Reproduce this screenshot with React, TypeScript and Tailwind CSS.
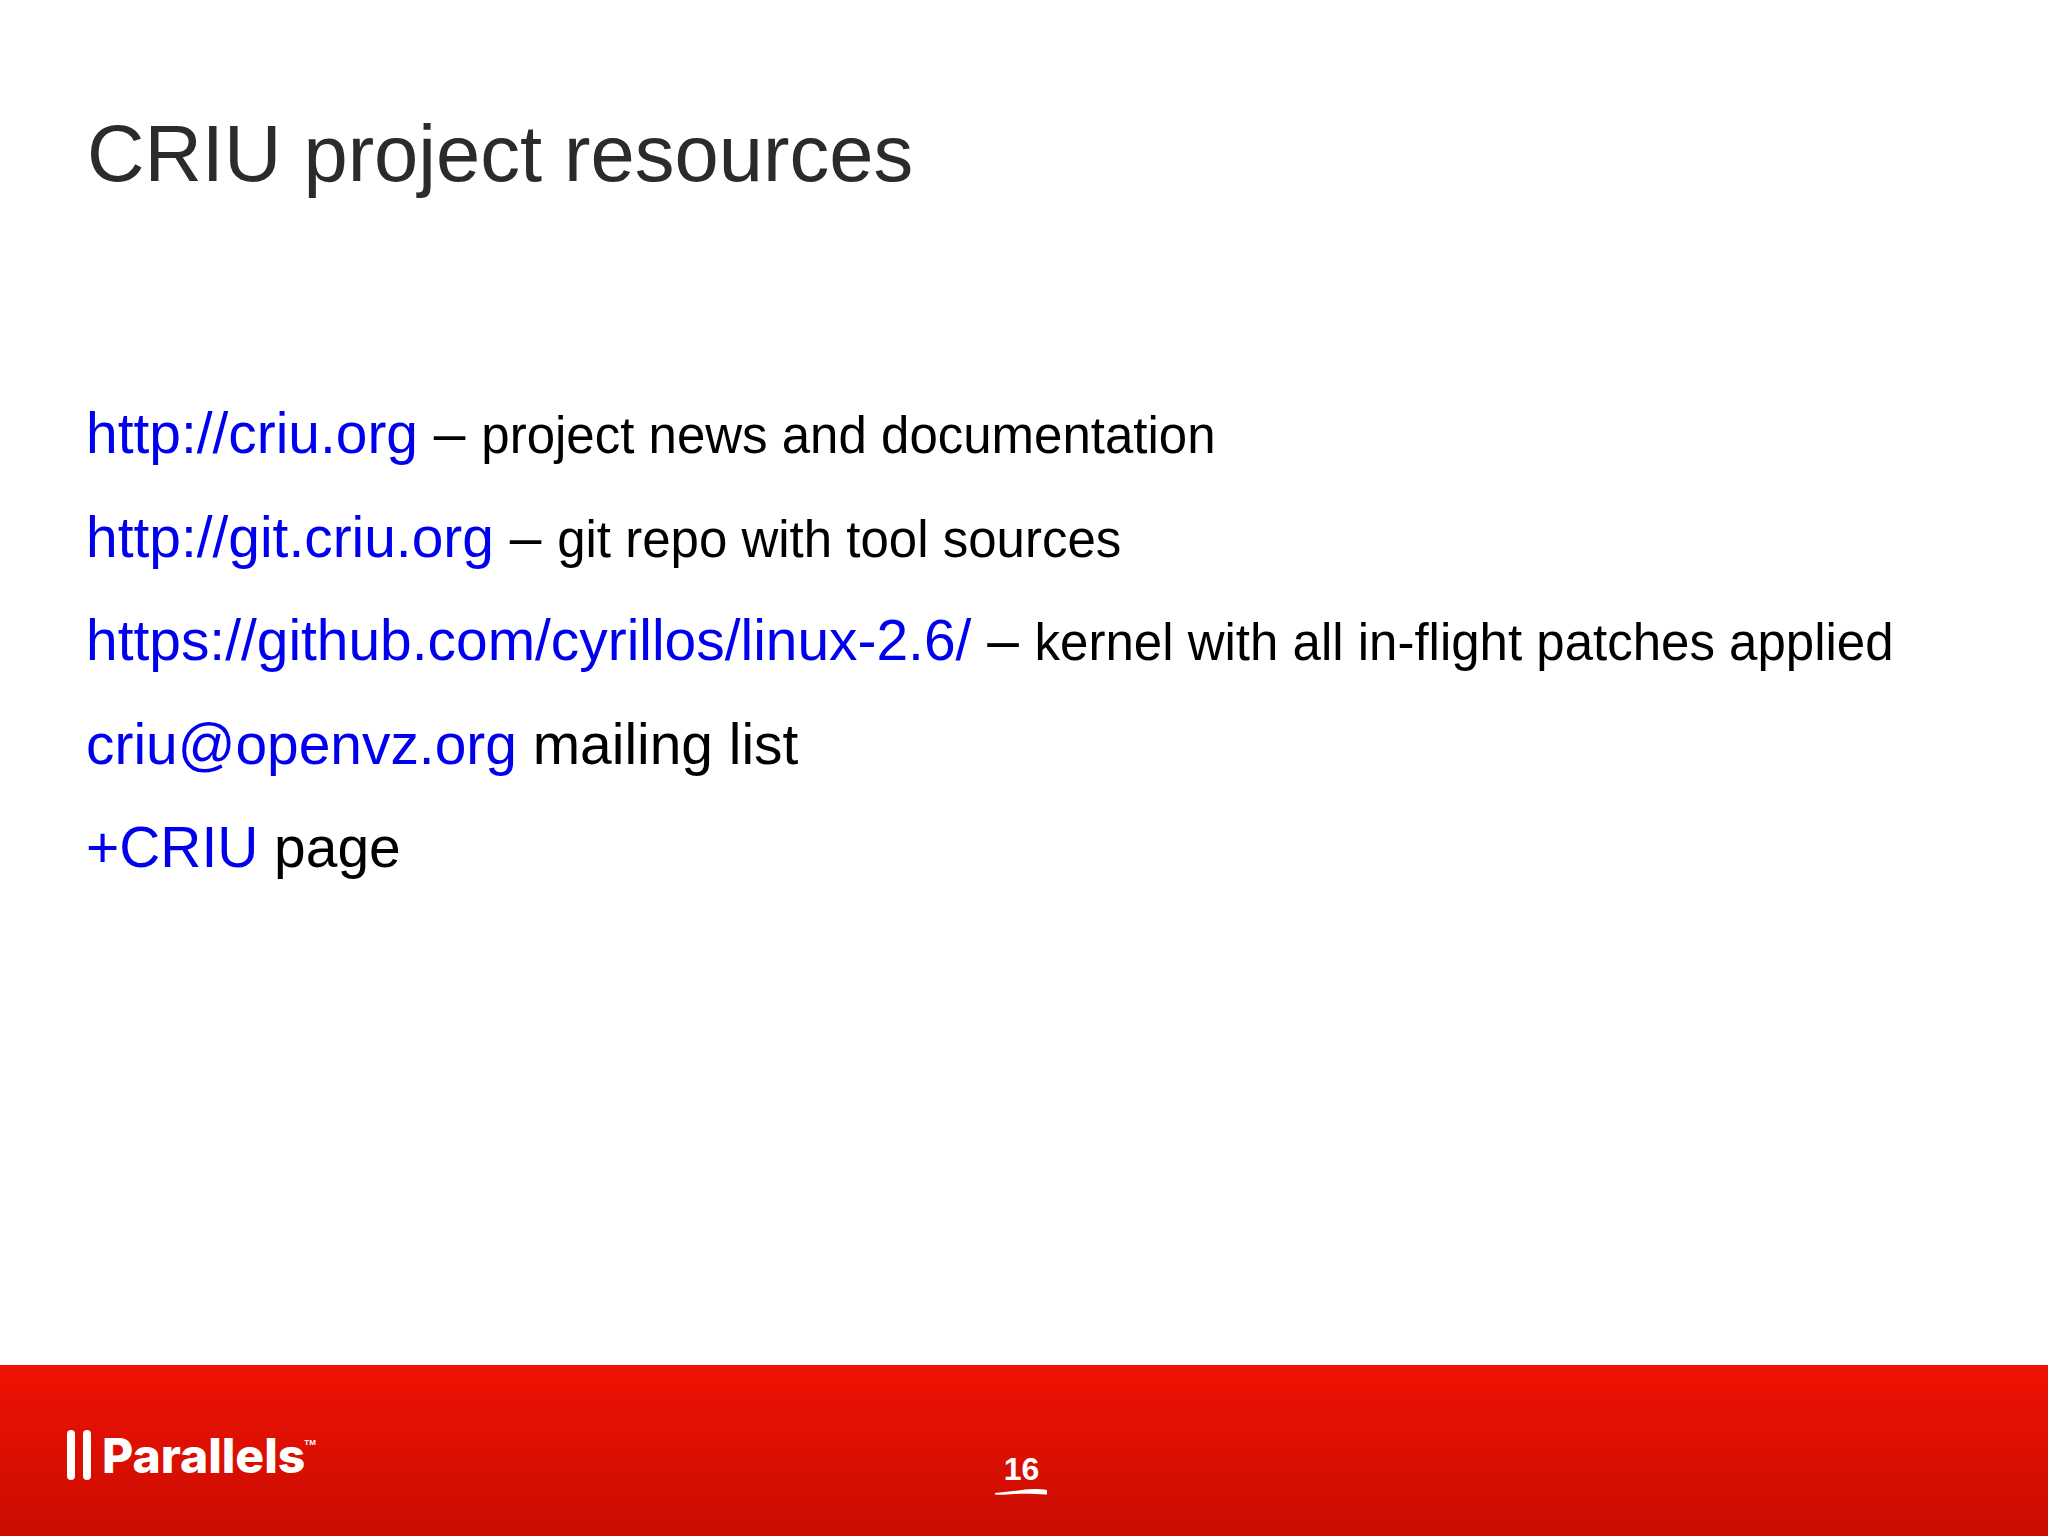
const font = "font-['Liberation_Sans',Arial,sans-serif]";

function Row({ link, rest, small }: { link: string; rest: string; small?: string }) {
  return (
    <p className="h-[103.5px] text-[56.9px] leading-[103px] whitespace-nowrap text-black">
      <span className="text-[#0000ee]">{link}</span>
      {rest}
      {small && <span className="text-[51px]">{small}</span>}
    </p>
  );
}

export default function App() {
  return (
    <div className={`flex h-[1536px] w-[2048px] flex-col overflow-hidden bg-white ${font}`}>
      <main className="flex-1 pl-[86px]">
        <h1 className="pt-[108px] pl-[1px] text-[79.5px] leading-[92px] text-[#2b2b2b]">CRIU project resources</h1>
        <div className="pt-[182px]">
          <Row link="http://criu.org" rest=" – " small="project news and documentation" />
          <Row link="http://git.criu.org" rest=" – " small="git repo with tool sources" />
          <Row link="https://github.com/cyrillos/linux-2.6/" rest=" – " small="kernel with all in-flight patches applied" />
          <Row link="criu@openvz.org" rest=" mailing list" />
          <Row link="+CRIU" rest=" page" />
        </div>
      </main>
      <footer className="relative flex h-[171px] items-start bg-gradient-to-b from-[#ef1204] to-[#c90d00] text-white">
        <div className="ml-[67px] mt-[65px] flex items-start">
          <div className="flex gap-[8px]">
            <div className="h-[50px] w-[8px] rounded-[4px] bg-white" />
            <div className="h-[50px] w-[8px] rounded-[4px] bg-white" />
          </div>
          <span className="ml-[11px] mt-[1px] font-['Inter',sans-serif] text-[48px] leading-[50px] font-extrabold tracking-[0px]">Parallels</span>
          <span className="mt-[9px] -ml-[1px] text-[8px] leading-[8px] font-bold">TM</span>
        </div>
        <div className="absolute left-[995px] top-[86px] flex w-[52px] flex-col items-center">
          <span className="pl-[1px] text-[32px] leading-[36px] font-bold">16</span>
          <svg width="52" height="8" viewBox="0 0 52 8" className="mt-[1px]">
            <path d="M0 5 C10 4 20 3 30 1.5 C38 0.5 46 1 52 2 L52 6.5 C40 6 30 5.5 20 6 C12 6.5 6 7 0 6.5 Z" fill="#fff" />
          </svg>
        </div>
      </footer>
    </div>
  );
}
